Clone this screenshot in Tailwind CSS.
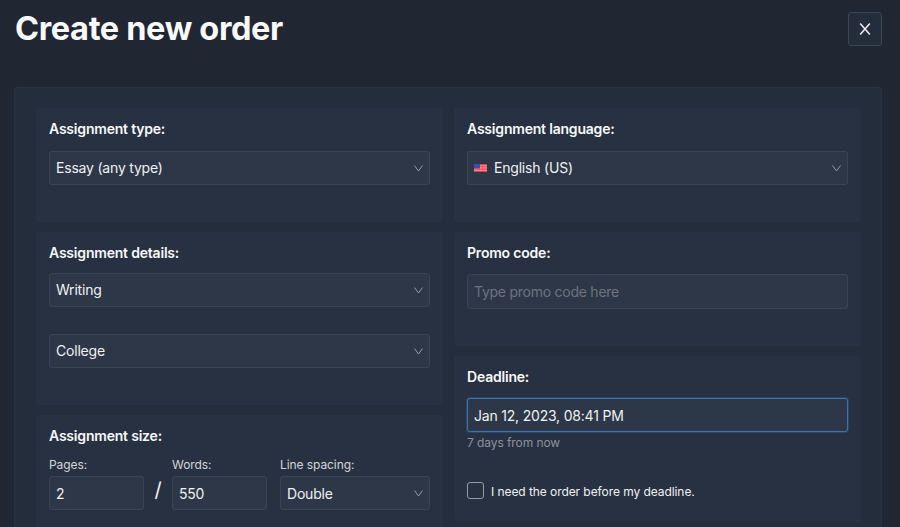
<!DOCTYPE html>
<html lang="en">
<head>
  <meta charset="UTF-8" />
  <meta name="viewport" content="width=device-width, initial-scale=1.0" />
  <title>Create new order</title>
  <script src="https://cdn.jsdelivr.net/npm/@tailwindcss/browser@4"></script>
</head>
<body class="h-screen overflow-hidden bg-[#202733] font-[Inter,sans-serif] text-[14px] tracking-[-0.2px] text-[#eff1f3]">
  <div class="flex h-full flex-col pl-[14px] pr-[18px]">
    <!-- Header -->
    <header class="flex h-[87px] shrink-0 items-start justify-between">
      <h1 class="mt-[9px] pl-px text-[32.5px] leading-10 font-bold tracking-[-0.35px] text-[#fafafc]">Create new order</h1>
      <button class="mt-3 flex h-[34px] w-[34px] items-center justify-center rounded-[3px] border border-[#3c4552] bg-[#242d3b]" aria-label="Close">
        <svg class="h-3 w-3" viewBox="0 0 12 12" fill="none" stroke="#eeeff1" stroke-width="1.5"><path d="M1.2 .5L10.8 11.5M10.8 .5L1.2 11.5" /></svg>
      </button>
    </header>

    <!-- Order form -->
    <main class="grid flex-1 grid-cols-2 gap-x-[11px] rounded-t-[3px] border border-b-0 border-[#283242] bg-[#242d3b] pt-5 pr-5 pl-[21px]">
      <div class="flex flex-col gap-[10px]">
        <section class="h-[114px] shrink-0 rounded-[3px] bg-[#283141] px-[13px] pt-[11px]">
          <h2 class="leading-5 font-semibold text-[#f8f9fa]">Assignment type:</h2>
          <div class="mt-3 flex h-[34px] items-center justify-between rounded-[3px] border border-[#3b4453] bg-[#2e3747] px-1.5">
            <span class="pb-0.5">Essay (any type)</span>
            <svg class="h-[7px] w-[9px]" viewBox="0 0 9 7" fill="none" stroke="#949aa3"><path d="M.5 .5L4.5 6L8.5 .5" /></svg>
          </div>
        </section>
        <section class="h-[173px] shrink-0 rounded-[3px] bg-[#283141] px-[13px] pt-[11px]">
          <h2 class="leading-5 font-semibold text-[#f8f9fa]">Assignment details:</h2>
          <div class="mt-[10px] flex h-[34px] items-center justify-between rounded-[3px] border border-[#3b4453] bg-[#2e3747] px-1.5">
            <span class="pb-0.5">Writing</span>
            <svg class="h-[7px] w-[9px]" viewBox="0 0 9 7" fill="none" stroke="#949aa3"><path d="M.5 .5L4.5 6L8.5 .5" /></svg>
          </div>
          <div class="mt-[27px] flex h-[34px] items-center justify-between rounded-[3px] border border-[#3b4453] bg-[#2e3747] px-1.5">
            <span class="pb-0.5">College</span>
            <svg class="h-[7px] w-[9px]" viewBox="0 0 9 7" fill="none" stroke="#949aa3"><path d="M.5 .5L4.5 6L8.5 .5" /></svg>
          </div>
        </section>
        <section class="flex-1 rounded-t-[3px] bg-[#283141] px-[13px] pt-[11px]">
          <h2 class="leading-5 font-semibold text-[#f8f9fa]">Assignment size:</h2>
          <div class="mt-[11px] flex">
            <label class="w-[95px] text-[12px] leading-4 tracking-[-0.08px] text-[#d3d6da]">Pages:
              <input type="text" value="2" class="mt-[3px] block h-[34px] w-full rounded-[3px] border border-[#3b4453] bg-[#2e3747] px-1.5 text-[14px] tracking-[-0.1px] text-[#eff1f3]" />
            </label>
            <span class="w-7 pt-[19px] text-center text-[20px] leading-7">/</span>
            <label class="w-[95px] text-[12px] leading-4 tracking-[-0.08px] text-[#d3d6da]">Words:
              <input type="text" value="550" class="mt-[3px] block h-[34px] w-full rounded-[3px] border border-[#3b4453] bg-[#2e3747] px-1.5 text-[14px] tracking-[-0.2px] text-[#eff1f3]" />
            </label>
            <div class="ml-[13px] flex-1">
              <span class="block text-[12px] leading-4 tracking-[-0.08px] text-[#d3d6da]">Line spacing:</span>
              <div class="mt-[3px] flex h-[34px] items-center justify-between rounded-[3px] border border-[#3b4453] bg-[#2e3747] px-1.5">
                <span>Double</span>
                <svg class="h-[7px] w-[9px]" viewBox="0 0 9 7" fill="none" stroke="#949aa3"><path d="M.5 .5L4.5 6L8.5 .5" /></svg>
              </div>
            </div>
          </div>
        </section>
      </div>

      <div class="flex flex-col gap-[10px]">
        <section class="h-[114px] shrink-0 rounded-[3px] bg-[#283141] px-[13px] pt-[11px]">
          <h2 class="leading-5 font-semibold text-[#f8f9fa]">Assignment language:</h2>
          <div class="mt-3 flex h-[34px] items-center rounded-[3px] border border-[#3b4453] bg-[#2e3747] px-1.5">
            <svg class="mr-[7px] h-2 w-[13px]" viewBox="0 0 13 9" preserveAspectRatio="none">
              <path fill="#f8343f" d="M0 0h13v9H0z" />
              <path stroke="#ffc1c4" stroke-width=".7" d="M0 1.9h13M0 3.7h13M0 5.5h13M0 7.3h13" />
              <path fill="#4349b0" d="M0 0h6v5H0z" />
            </svg>
            <span class="pb-0.5">English (US)</span>
            <svg class="ml-auto h-[7px] w-[9px]" viewBox="0 0 9 7" fill="none" stroke="#949aa3"><path d="M.5 .5L4.5 6L8.5 .5" /></svg>
          </div>
        </section>
        <section class="h-[114px] shrink-0 rounded-[3px] bg-[#283141] px-[13px] pt-[11px]">
          <h2 class="leading-5 font-semibold text-[#f8f9fa]">Promo code:</h2>
          <input type="text" placeholder="Type promo code here" class="mt-[11px] block h-[35px] w-full rounded-[3px] border border-[#3b4453] bg-[#2e3747] px-1.5 tracking-[-0.25px] placeholder:text-[#6c737f]" />
        </section>
        <section class="h-[166px] shrink-0 rounded-[3px] bg-[#283141] px-[13px] pt-[11px]">
          <h2 class="leading-5 font-semibold text-[#f8f9fa]">Deadline:</h2>
          <input type="text" value="Jan 12, 2023, 08:41 PM" class="mt-[11px] block h-[34px] w-full rounded-[3px] border border-[#3e72ad] bg-[#2e3747] px-1.5 tracking-[-0.2px] shadow-[0_0_0_1px_#284669]" />
          <p class="mt-[3px] text-[12px] leading-4 tracking-[-0.08px] text-[#8b919b]">7 days from now</p>
          <label class="mt-[31px] flex h-[17px] items-center gap-[7px] text-[12px] tracking-[-0.07px]">
            <span class="h-[17px] w-[17px] rounded-[3px] border border-[#969ba3]"></span>
            <span class="pt-[3px]">I need the order before my deadline.</span>
          </label>
        </section>
      </div>
    </main>
  </div>
</body>
</html>
